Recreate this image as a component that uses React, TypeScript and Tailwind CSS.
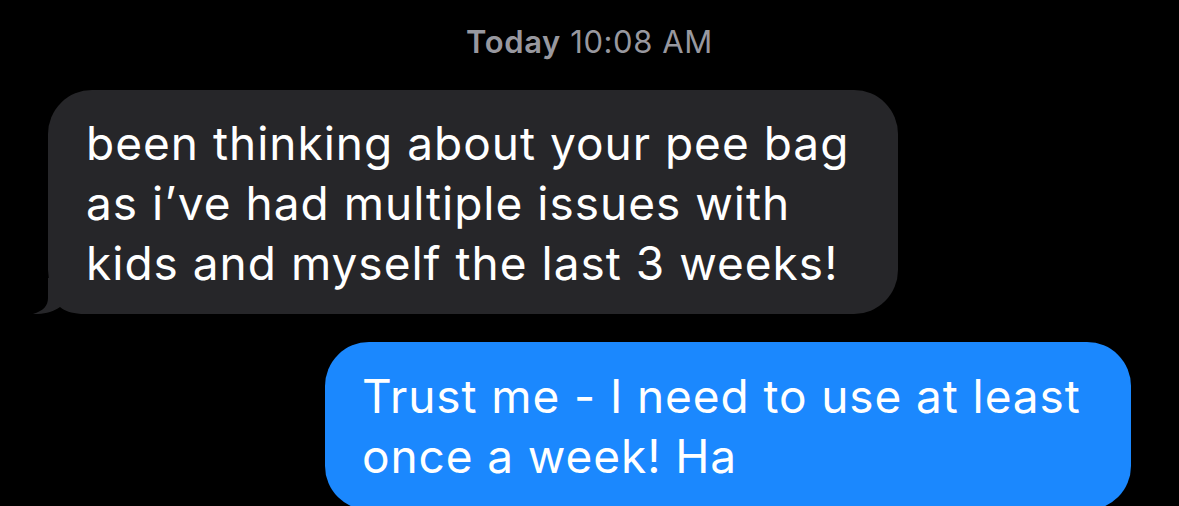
export default function App() {
  return (
    <div
      className="w-[1179px] h-[506px] overflow-hidden bg-black text-white"
      style={{ fontFamily: 'Inter, "Noto Sans", sans-serif' }}
    >
      <div className="pt-[23px] text-center text-[31px] leading-[37px] tracking-[0.6px] text-[#98989f]">
        <span className="font-semibold">Today</span> 10:08 AM
      </div>

      <div className="pl-[48px] pt-[30px]">
        <div className="relative w-[850px] rounded-[44px] bg-[#262629] pl-[38px] pr-[30px] pt-[23px] pb-[21px] text-[46px] leading-[60px] tracking-[1px]">
          <svg
            className="absolute left-[-17px] bottom-0"
            width="64"
            height="36"
            viewBox="0 0 64 36"
            fill="#262629"
          >
            <path d="M17 0 V20 C17 28 12 33 2 36 C12 36.5 22 34 29 29 C34 33 40 35 50 36 H64 V0 Z" />
          </svg>
          <div className="relative">
            been thinking about your pee bag
            <br />
            as i’ve had multiple issues with
            <br />
            kids and myself the last 3 weeks!
          </div>
        </div>
      </div>

      <div className="flex justify-end pr-[48px] pt-[28px]">
        <div className="w-[806px] rounded-[44px] bg-[#1b88fe] pl-[37px] pr-[30px] pt-[24px] pb-[24px] text-[46px] leading-[60px] tracking-[0.9px]">
          Trust me - I need to use at least
          <br />
          once a week! Ha
        </div>
      </div>
    </div>
  );
}
